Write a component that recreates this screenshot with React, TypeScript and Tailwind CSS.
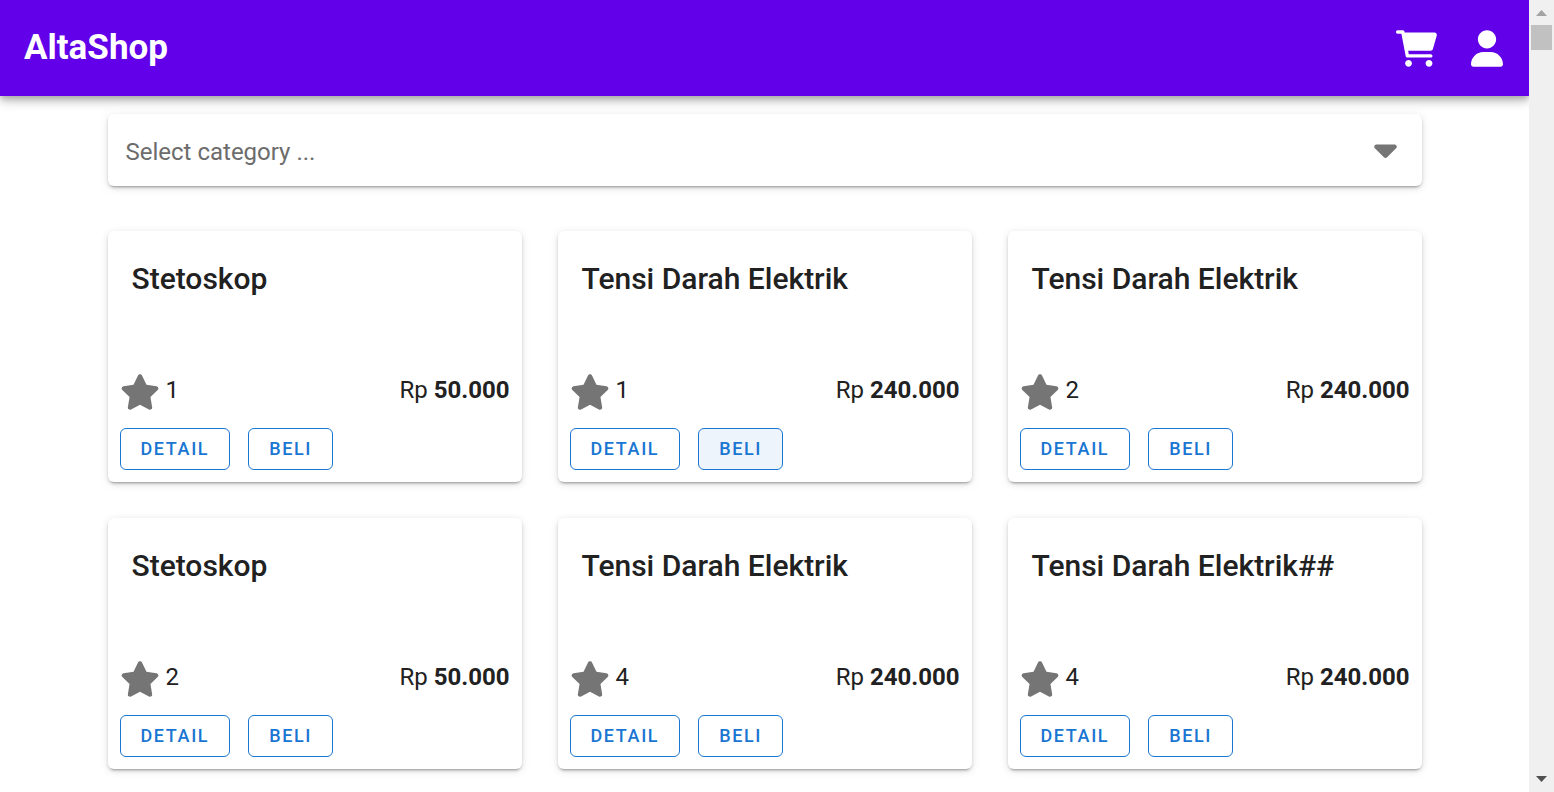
import { FaCaretDown, FaStar } from "react-icons/fa6";

type Product = {
  id: number;
  name: string;
  rating: number;
  price: string;
  highlighted?: boolean;
};

const products: Product[] = [
  { id: 1, name: "Stetoskop", rating: 1, price: "50.000" },
  { id: 2, name: "Tensi Darah Elektrik", rating: 1, price: "240.000", highlighted: true },
  { id: 3, name: "Tensi Darah Elektrik", rating: 2, price: "240.000" },
  { id: 4, name: "Stetoskop", rating: 2, price: "50.000" },
  { id: 5, name: "Tensi Darah Elektrik", rating: 4, price: "240.000" },
  { id: 6, name: "Tensi Darah Elektrik##", rating: 4, price: "240.000" },
];

const surface =
  "rounded-md bg-white shadow-[0_4px_2px_-3px_rgba(0,0,0,0.2),0_2px_3px_0_rgba(0,0,0,0.14),0_2px_8px_0_rgba(0,0,0,0.12)]";

function CartIcon() {
  return (
    <svg viewBox="0 0 576 512" fill="currentColor" aria-hidden="true" className="h-[37px] w-[41px]">
      <path d="M96 0C107.5 0 117.4 8.19 119.6 19.51L121.1 32H541.8C562.1 32 578.3 52.25 572.6 72.66L518.6 264.7C514.7 278.5 502.1 288 487.8 288H170.7L179.9 336H488C501.3 336 512 346.7 512 360C512 373.3 501.3 384 488 384H159.1C148.5 384 138.6 375.8 136.4 364.5L76.14 48H24C10.75 48 0 37.25 0 24C0 10.75 10.75 0 24 0H96zM128 464C128 437.5 149.5 416 176 416C202.5 416 224 437.5 224 464C224 490.5 202.5 512 176 512C149.5 512 128 490.5 128 464zM512 464C512 490.5 490.5 512 464 512C437.5 512 416 490.5 416 464C416 437.5 437.5 416 464 416C490.5 416 512 437.5 512 464z" />
    </svg>
  );
}

function UserIcon() {
  return (
    <svg viewBox="0 0 448 512" fill="currentColor" aria-hidden="true" className="h-[37px] w-8">
      <path d="M224 256c70.7 0 128-57.31 128-128s-57.3-128-128-128C153.3 0 96 57.31 96 128S153.3 256 224 256zM274.7 304H173.3C77.61 304 0 381.6 0 477.3c0 19.14 15.52 34.67 34.66 34.67h378.7C432.5 512 448 496.5 448 477.3C448 381.6 370.4 304 274.7 304z" />
    </svg>
  );
}

function OutlinedButton({ label, active }: { label: string; active?: boolean }) {
  return (
    <button
      type="button"
      className={`flex h-[42px] items-center rounded-md border border-[#1976d2] px-5 text-lg font-medium tracking-[0.09em] text-[#1976d2] uppercase hover:bg-[#edf4fc] ${
        active ? "bg-[#edf4fc]" : "bg-white"
      }`}
    >
      {label}
    </button>
  );
}

function Header() {
  return (
    <header className="relative z-10 flex h-24 items-center justify-between bg-[#6200ea] pr-[26px] pl-6 text-white shadow-[0_3px_6px_-1px_rgba(0,0,0,0.2),0_6px_8px_0_rgba(0,0,0,0.14),0_2px_15px_0_rgba(0,0,0,0.12)]">
      <a href="#" className="text-[35px] leading-13 font-bold">
        AltaShop
      </a>
      <nav className="flex items-center gap-[34px]">
        <a href="#cart" aria-label="Cart">
          <CartIcon />
        </a>
        <a href="#account" aria-label="Account">
          <UserIcon />
        </a>
      </nav>
    </header>
  );
}

function CategorySelect() {
  return (
    <div className={`relative ${surface}`}>
      <select
        aria-label="Category"
        defaultValue=""
        className="h-[72px] w-full cursor-pointer appearance-none rounded-md bg-transparent pt-1 pr-16 pl-[18px] text-2xl text-[#6c6c6c] outline-none"
      >
        <option value="">Select category ...</option>
      </select>
      <FaCaretDown className="pointer-events-none absolute top-[17px] right-[25px] h-9 w-[23px] text-[#757575]" />
    </div>
  );
}

function ProductCard({ product }: { product: Product }) {
  return (
    <article className={`flex min-h-[251px] flex-col p-3 ${surface}`}>
      <h2 className="mt-3 px-3 text-3xl leading-12 font-medium">{product.name}</h2>
      <div className="mt-auto flex items-start justify-between text-2xl">
        <div className="flex items-start gap-[6px]">
          <FaStar className="h-9 w-10 text-[#757575]" />
          <span>{product.rating}</span>
        </div>
        <p>
          Rp <strong className="font-bold">{product.price}</strong>
        </p>
      </div>
      <div className="mt-[18px] flex gap-[18px]">
        <OutlinedButton label="Detail" />
        <OutlinedButton label="Beli" active={product.highlighted} />
      </div>
    </article>
  );
}

function Scrollbar() {
  return (
    <div
      aria-hidden="true"
      className="sticky top-0 z-20 flex h-screen w-[25px] shrink-0 flex-col items-center bg-[#f0f0f0]"
    >
      <svg viewBox="0 0 25 25" className="h-[25px] w-[25px] fill-[#a3a3a3]">
        <path d="M7 16h11l-5.5-6z" />
      </svg>
      <div className="h-[25px] w-[21px] bg-[#c1c1c1]" />
      <svg viewBox="0 0 25 25" className="mt-auto h-[25px] w-[25px] fill-[#505050]">
        <path d="M7 9h11l-5.5 6z" />
      </svg>
    </div>
  );
}

export default function App() {
  return (
    <div className="flex min-h-screen bg-white font-[Roboto,sans-serif] text-[#212121]">
      <div className="min-w-0 flex-1">
        <Header />
        <main className="mx-auto flex max-w-[1350px] flex-col gap-[45px] px-[18px] pt-[18px] pb-[22px]">
          <CategorySelect />
          <section aria-label="Products" className="grid gap-9 md:grid-cols-2 lg:grid-cols-3">
            {products.map((product) => (
              <ProductCard key={product.id} product={product} />
            ))}
          </section>
        </main>
      </div>
      <Scrollbar />
    </div>
  );
}
